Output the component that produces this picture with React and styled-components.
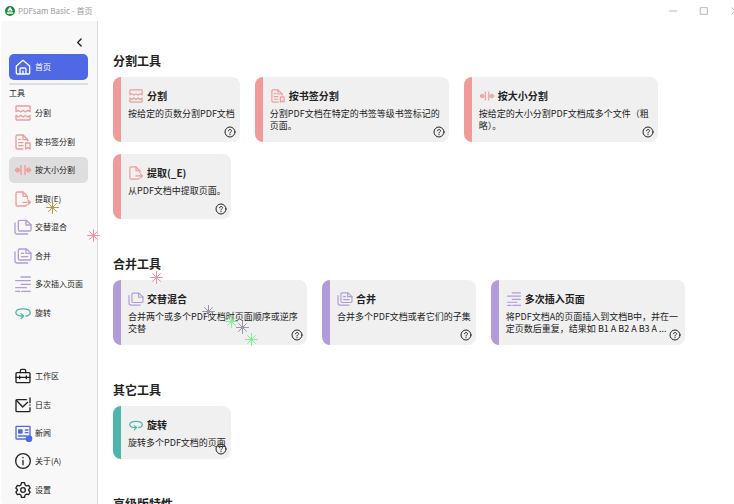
import React from 'react';
import styled, { createGlobalStyle } from 'styled-components';

const RED = '#f19a9a';
const PURPLE = '#b19cd9';
const TEAL = '#4db6ac';
const BLUE = '#4f69e6';
const INK = '#222';

const GlobalStyle = createGlobalStyle`
  * {
    box-sizing: border-box;
  }

  body {
    margin: 0;
    background: #fff;
    color: ${INK};
    font-family: "Noto Sans CJK SC", "Open Sans", sans-serif;
  }

  button {
    margin: 0;
    padding: 0;
    border: 0;
    background: none;
    color: inherit;
    font: inherit;
    cursor: pointer;
  }
`

const Window = styled.div`
  position: relative;
  display: flex;
  flex-direction: column;
  height: 100vh;
  overflow: hidden;
`

const TitleBar = styled.header`
  display: flex;
  flex: none;
  align-items: center;
  height: 21px;
  padding-left: 5px;
`

const AppTitle = styled.h1`
  flex: 1;
  margin: 0 0 0 3px;
  font-size: 8px;
  font-weight: 400;
  line-height: 12px;
  color: #999;
`

const WindowButtons = styled.div`
  display: flex;
  gap: 23px;
  margin-right: -5px;
  color: #999;

  button {
    display: flex;
  }
`

const Body = styled.div`
  display: flex;
  flex: 1;
  min-height: 0;
`

const Sidebar = styled.nav`
  flex: none;
  width: 97px;
  margin-left: 1px;
  padding: 0 9px 0 8px;
  border-right: 1px solid #dcdcdc;
  border-radius: 4px 0 0 4px;
  background: #f8f8f8;
`

const CollapseRow = styled.div`
  display: flex;
  align-items: flex-end;
  justify-content: flex-end;
  height: 33px;
  padding: 0 3px 6px 0;
`

const CollapseButton = styled.button`
  display: flex;
`

const NavList = styled.ul`
  display: grid;
  grid-auto-rows: 1fr;
  align-items: center;
  height: ${props => props.$height}px;
  margin: ${props => props.$top || 0}px 0 0;
  padding: 0;
  list-style: none;
`

const NavButton = styled.button`
  && {
    display: flex;
    align-items: center;
    gap: 4px;
    width: 100%;
    height: 26px;
    padding-left: 6px;
    border-radius: 5px;
    font-size: 8px;
    line-height: 12px;
    white-space: nowrap;
    background: ${props => props.$bg || 'transparent'};
    color: ${props => props.$fg || INK};
  }
`

const NavLabel = styled.h2`
  margin: 3px 0 0;
  padding-top: 2px;
  border-top: 2px solid #ddd;
  font-size: 8px;
  font-weight: 400;
  line-height: 12px;
`

const Main = styled.main`
  flex: 1;
  min-width: 0;
  padding: 32px 16px 0 15px;
`

const Section = styled.section`
  margin-bottom: 37px;
`

const SectionTitle = styled.h2`
  margin: 0 0 8px;
  font-size: 12px;
  font-weight: 700;
  line-height: 16px;
`

const Cards = styled.div`
  display: flex;
  flex-wrap: wrap;
  gap: 12px 15px;
`

const Card = styled.article`
  position: relative;
  width: max-content;
  max-width: 194px;
  min-height: ${props => props.$tall ? 65 : 53}px;
  padding: 11px 5px 9px 7px;
  border-left: 8px solid ${props => props.$color};
  border-radius: 8px;
  background: #f0f0f0;
`

const CardTitle = styled.h3`
  display: flex;
  align-items: center;
  gap: 4px;
  margin: 0 0 5px 1px;
  font-size: 10px;
  font-weight: 700;
  line-height: 15px;
`

const CardText = styled.p`
  margin: 0;
  font-size: 9px;
  font-weight: 400;
  line-height: 12px;
`

const HelpButton = styled.button`
  position: absolute;
  right: 4px;
  bottom: 4px;
  display: flex;
`

const Spark = styled.svg`
  position: absolute;
  left: ${props => props.$x}px;
  top: ${props => props.$y}px;
  pointer-events: none;
`

const icons = {
  home: (
    <>
      <path d="M2 10.500 12 2l10 8.500V21a1.500 1.500 0 0 1-1.500 1.500h-17A1.500 1.500 0 0 1 2 21z" />
      <path d="M7.500 22v-6.500a2 2 0 0 1 2-2h5a2 2 0 0 1 2 2V22M12 18v4" />
    </>
  ),
  split: (
    <>
      <path d="M1.500 10V2.500A1 1 0 0 1 2.500 1.500h19a1 1 0 0 1 1 1V10l-3.500-2-3.500 2.500L12 8l-3.500 2.500L5 8z" />
      <path d="M1.500 15.500v6a1 1 0 0 0 1 1h19a1 1 0 0 0 1-1v-6L19 18l-3.500-2.500L12 18l-3.500-2.500L5 18z" />
    </>
  ),
  bookmarks: (
    <>
      <path d="M12 22.500H3.500a2 2 0 0 1-2-2v-17a2 2 0 0 1 2-2H12l7 7v2" />
      <path d="M12 1.500v7h7M5.500 8h3M5.500 13H12M5.500 17.500H12" />
      <path d="M16 13.500h6.500v9l-3.200-2-3.300 2z" />
    </>
  ),
  size: (
    <>
      <path d="M9 5v14M15 5v14M1 12h6M17 12h6" />
      <path d="M3.500 9 .500 12l3 3M20.500 9l3 3-3 3M5.500 9.500v5M18.500 9.500v5" />
    </>
  ),
  extract: (
    <>
      <path d="M17 21a2 2 0 0 1-2 1.500H3.500a2 2 0 0 1-2-2v-17a2 2 0 0 1 2-2H12l6.500 6.500v3" />
      <path d="M12 1.500V8h6.500M12 17h11M19.500 13.500 23 17l-3.500 3.500" />
    </>
  ),
  mix: (
    <>
      <path d="M7 2h10l7 6.500V16a2 2 0 0 1-2 2H7a2 2 0 0 1-2-2V4a2 2 0 0 1 2-2z" />
      <path d="M16.500 2v7H24M0 6v13a3.500 3.500 0 0 0 3.500 3.500H19" />
    </>
  ),
  merge: (
    <>
      <path d="M7 1.500h10l7 6.500v8a2 2 0 0 1-2 2H7a2 2 0 0 1-2-2v-12.500a2 2 0 0 1 2-2z" />
      <path d="M16.500 1.500V8H24M9.500 8h3.500M9.500 13H19M0 6v13a3.500 3.500 0 0 0 3.500 3.500H19" />
    </>
  ),
  insert: (
    <path d="M9 1.500h14M1 7h22M9 12.500h14M1 17.500h16M1 23h6M10 23h13" />
  ),
  rotate: (
    <>
      <path d="M16.500 16.500c4-.700 6.200-2.500 6.200-5C22.700 8 18 5.800 12 5.800S1.300 8 1.300 11.500c0 3 3.200 5 10.700 5" />
      <path d="M9 13l4 3.500-4 4" />
    </>
  ),
  workspace: (
    <>
      <rect x="1.500" y="7" width="21" height="15" rx="1.500" />
      <path d="M8 7V4a2 2 0 0 1 2-2h4a2 2 0 0 1 2 2v3M1.500 14h21M7 12v4M17 12v4" />
    </>
  ),
  logs: (
    <>
      <path d="M17 4H3a1.500 1.500 0 0 0-1.500 1.500v15A1.500 1.500 0 0 0 3 22h18a1.500 1.500 0 0 0 1.500-1.500V16" />
      <path d="M2 5l9.500 10L19 8M22.500 1.500v7M22.500 12v.500" />
    </>
  ),
  news: (
    <>
      <rect x="1.500" y="2" width="21" height="19" rx="1" />
      <path d="M15.500 7.500h4M15.500 11.500h4M5 16.500h12" />
      <rect x="5.500" y="7.500" width="5" height="4.500" fill={BLUE} />
      <circle cx="21" cy="20.500" r="4" fill={BLUE} />
    </>
  ),
  about: (
    <>
      <circle cx="12" cy="12" r="11" />
      <path d="M12 11v6.500M12 6.500v.500" />
    </>
  ),
  settings: (
    <>
      <path d="M9.700 1h4.600l.900 3.500 2.100 1.200 3.100-.700 2.300 4-2.200 2.300v1.400l2.200 2.300-2.300 4-3.100-.700-2.100 1.200-.900 3.500H9.700l-.900-3.500-2.100-1.200-3.100.700-2.300-4 2.200-2.300v-1.400L1.300 9l2.300-4 3.100.700 2.100-1.200z" />
      <circle cx="12" cy="12" r="3.500" />
    </>
  ),
  back: <path d="M15.500 4.500 8 12l7.500 7.500" />,
  minimize: <path d="M1 12h22" />,
  maximize: <rect x="2" y="2" width="20" height="20" />,
  close: <path d="M2 2l20 20M22 2 2 22" />,
};

const Icon = ({ name, size = 16, color = 'currentColor', stroke = 2 }) => (
  <svg
    width={size}
    height={size}
    viewBox="0 0 24 24"
    fill="none"
    stroke={color}
    strokeWidth={stroke}
    strokeLinecap="round"
    strokeLinejoin="round"
    overflow="visible"
    aria-hidden="true"
  >
    {icons[name]}
  </svg>
)

const Logo = () => (
  <svg width="10" height="10" viewBox="0 0 20 20" aria-hidden="true">
    <circle cx="10" cy="10" r="10" fill="#168a43" />
    <path d="M10 4 6.500 9.500M10 4l3.500 5.500M5 14h10" fill="none" stroke="#fff" strokeWidth="3" strokeLinecap="round" />
    <circle cx="10" cy="11" r="1.500" fill="#f2d24b" />
  </svg>
)

const HelpIcon = () => (
  <svg width="12" height="12" viewBox="0 0 24 24" fill="none" stroke={INK} strokeWidth="2" strokeLinecap="round">
    <circle cx="12" cy="12" r="10" />
    <path d="M9 9.500C9 6 15 6 15 9.500c0 2.200-3 2.200-3 4.500M12 17v.500" />
  </svg>
)

const tools = [
  { icon: 'split', color: RED, label: '分割' },
  { icon: 'bookmarks', color: RED, label: '按书签分割' },
  { icon: 'size', color: RED, label: '按大小分割', hovered: true },
  { icon: 'extract', color: RED, label: '提取(E)' },
  { icon: 'mix', color: PURPLE, label: '交替混合' },
  { icon: 'merge', color: PURPLE, label: '合并' },
  { icon: 'insert', color: PURPLE, label: '多次插入页面' },
  { icon: 'rotate', color: TEAL, label: '旋转' },
];

const footerItems = [
  { icon: 'workspace', label: '工作区' },
  { icon: 'logs', label: '日志' },
  { icon: 'news', color: BLUE, label: '新闻' },
  { icon: 'about', label: '关于(A)' },
  { icon: 'settings', label: '设置' },
];

const sections = [
  {
    title: '分割工具',
    color: RED,
    tall: true,
    cards: [
      { icon: 'split', title: '分割', text: '按给定的页数分割PDF文档' },
      { icon: 'bookmarks', title: '按书签分割', text: '分割PDF文档在特定的书签等级书签标记的页面。' },
      { icon: 'size', title: '按大小分割', text: '按给定的大小分割PDF文档成多个文件（粗略）。' },
      { icon: 'extract', title: '提取(_E)', text: '从PDF文档中提取页面。' },
    ],
  },
  {
    title: '合并工具',
    color: PURPLE,
    tall: true,
    cards: [
      { icon: 'mix', title: '交替混合', text: '合并两个或多个PDF文档时页面顺序或逆序交替' },
      { icon: 'merge', title: '合并', text: '合并多个PDF文档或者它们的子集' },
      { icon: 'insert', title: '多次插入页面', text: '将PDF文档A的页面插入到文档B中，并在一定页数后重复，结果如 B1 A B2 A B3 A ...' },
    ],
  },
  {
    title: '其它工具',
    color: TEAL,
    cards: [
      { icon: 'rotate', title: '旋转', text: '旋转多个PDF文档的页面' },
    ],
  },
  { title: '高级版特性', cards: [] },
];

// cursor trail, drawn over everything
const sparks = [
  { x: 46, y: 201, color: '#b39a4c' },
  { x: 87, y: 229, color: '#ff8fa3' },
  { x: 150, y: 271, color: '#ff8fa3' },
  { x: 202, y: 305, color: '#9896a6' },
  { x: 225, y: 315, color: '#86ee9c' },
  { x: 236, y: 321, color: '#9896a6' },
  { x: 245, y: 333, color: '#86ee9c' },
];

const NavItem = ({ item }) => (
  <li>
    <NavButton type="button" $bg={item.hovered && '#dedede'}>
      <Icon name={item.icon} color={item.color} />
      {item.label}
    </NavButton>
  </li>
)

const App = () => {
  return (
    <Window>
      <GlobalStyle />
      <TitleBar>
        <Logo />
        <AppTitle>PDFsam Basic - 首页</AppTitle>
        <WindowButtons>
          <button type="button" aria-label="最小化"><Icon name="minimize" size={8} /></button>
          <button type="button" aria-label="最大化"><Icon name="maximize" size={8} /></button>
          <button type="button" aria-label="关闭"><Icon name="close" size={8} /></button>
        </WindowButtons>
      </TitleBar>
      <Body>
        <Sidebar>
          <CollapseRow>
            <CollapseButton type="button" aria-label="收起">
              <Icon name="back" size={11} stroke={3} />
            </CollapseButton>
          </CollapseRow>
          <NavButton type="button" $bg={BLUE} $fg="#fff">
            <Icon name="home" />
            首页
          </NavButton>
          <NavLabel>工具</NavLabel>
          <NavList $height={228}>
            {tools.map(item => <NavItem key={item.icon} item={item} />)}
          </NavList>
          <NavList $height={142} $top={35}>
            {footerItems.map(item => <NavItem key={item.icon} item={item} />)}
          </NavList>
        </Sidebar>
        <Main>
          {sections.map(section => (
            <Section key={section.title}>
              <SectionTitle>{section.title}</SectionTitle>
              <Cards>
                {section.cards.map(card => (
                  <Card key={card.icon} $color={section.color} $tall={section.tall}>
                    <CardTitle>
                      <Icon name={card.icon} size={14} color={section.color} />
                      {card.title}
                    </CardTitle>
                    <CardText>{card.text}</CardText>
                    <HelpButton type="button" aria-label="帮助"><HelpIcon /></HelpButton>
                  </Card>
                ))}
              </Cards>
            </Section>
          ))}
        </Main>
      </Body>
      {sparks.map(spark => (
        <Spark key={spark.x} $x={spark.x} $y={spark.y} width="13" height="13" viewBox="0 0 26 26" stroke={spark.color} strokeWidth="2" strokeLinecap="round">
          <path d="M13 1v24M1 13h24M5 5l16 16M21 5 5 21" />
          <circle cx="13" cy="13" r="3" fill={spark.color} />
        </Spark>
      ))}
    </Window>
  )
}

export default App;
